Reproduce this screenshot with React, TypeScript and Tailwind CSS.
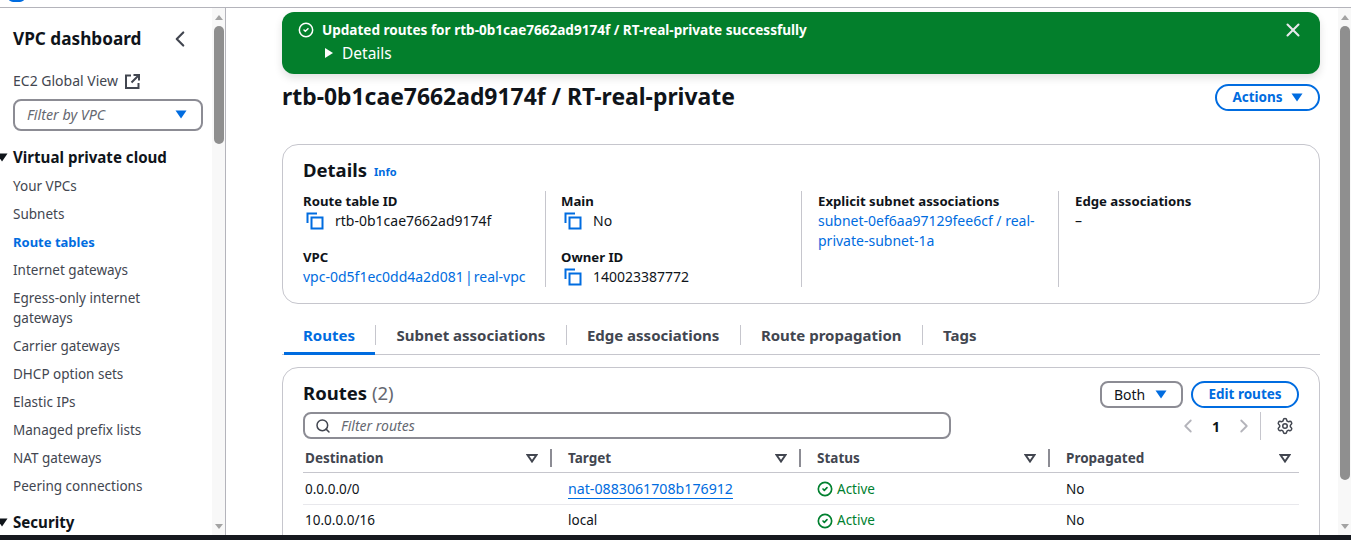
import React from 'react';
import { ChevronLeft, ChevronRight, CircleCheck, Search, Settings, X } from 'lucide-react';

const navItems = [
  'Your VPCs',
  'Subnets',
  'Route tables',
  'Internet gateways',
  'Egress-only internet gateways',
  'Carrier gateways',
  'DHCP option sets',
  'Elastic IPs',
  'Managed prefix lists',
  'NAT gateways',
  'Peering connections',
];

function Caret({ className = '' }: { className?: string }) {
  return (
    <svg width="12" height="9" viewBox="0 0 12 9" className={className}>
      <path d="M0.5 0.5H11.5L6 8.5Z" fill="currentColor" />
    </svg>
  );
}

function CopyIcon() {
  return (
    <svg width="18" height="18" viewBox="0 0 18 18" fill="none" stroke="#006ce0" strokeWidth="2" className="shrink-0">
      <path d="M1.5 11V1.5H11" />
      <rect x="5.5" y="5.5" width="11" height="11" />
    </svg>
  );
}

function SortIcon() {
  return (
    <svg width="12" height="9" viewBox="0 0 12 9" fill="none" stroke="#424650" strokeWidth="2" className="shrink-0">
      <path d="M1.5 1H10.5L6 7.5Z" />
    </svg>
  );
}

function Scrollbar({ thumbHeight }: { thumbHeight: string }) {
  return (
    <div className="flex h-full w-[13px] shrink-0 flex-col items-center bg-[#f8f8f8]">
      <div className="flex h-[18px] shrink-0 items-center justify-center">
        <div className="h-0 w-0 border-x-[4px] border-b-[5px] border-x-transparent border-b-[#a3a3a3]" />
      </div>
      <div className={`w-[10px] shrink-0 rounded-full bg-[#8f8f8f] ${thumbHeight}`} />
      <div className="flex-1" />
      <div className="flex h-[18px] shrink-0 items-center justify-center">
        <div className="h-0 w-0 border-x-[4px] border-t-[5px] border-x-transparent border-t-[#a3a3a3]" />
      </div>
    </div>
  );
}

function Sidebar() {
  return (
    <aside className="flex w-[226px] shrink-0 border-r border-[#b4b4bb] bg-white">
      <div className="min-w-0 flex-1 overflow-hidden">
        <div className="flex h-[62px] items-center justify-between pl-[13px] pr-[19px]">
          <h2 className="text-[17.2px] font-bold leading-[22px] text-[#0f141a]">VPC dashboard</h2>
          <ChevronLeft size={26} strokeWidth={2} className="text-[#424650]" />
        </div>
        <div className="flex items-center gap-[7px] pl-[13px] text-[14px] leading-[22px] text-[#424650]">
          EC2 Global View
          <svg width="15" height="15" viewBox="0 0 15 15" fill="none" stroke="#424650" strokeWidth="2">
            <path d="M6 1.5H1V14H13.5V9" />
            <path d="M6.5 8.5L13.5 1.5M8.5 1H14V6.5" />
          </svg>
        </div>
        <div className="ml-[13px] mt-[7px] flex h-[32px] w-[190px] items-center justify-between rounded-lg border-2 border-[#8c8c94] pb-[1px] pl-[12px] pr-[14px]">
          <span className="text-[14.3px] italic leading-[20px] text-[#656871]">Filter by VPC</span>
          <Caret className="text-[#006ce0]" />
        </div>
        <div className="mt-[15px] flex h-[22px] items-center">
          <Caret className="-ml-[4px] mr-[5px] w-[12px] text-[#0f141a]" />
          <span className="text-[15.1px] font-bold text-[#0f141a]">Virtual private cloud</span>
        </div>
        <ul className="mt-[4px]">
          {navItems.map((item) => (
            <li
              key={item}
              className={`py-[4px] pl-[13px] pr-[32px] leading-[20px] ${
                item === 'Route tables' ? 'text-[13px] font-bold text-[#006ce0]' : 'text-[13.5px] text-[#424650]'
              }`}
            >
              {item}
            </li>
          ))}
        </ul>
        <div className="mt-[11px] flex h-[22px] items-center">
          <Caret className="-ml-[4px] mr-[5px] w-[12px] text-[#0f141a]" />
          <span className="text-[15.1px] font-bold text-[#0f141a]">Security</span>
        </div>
      </div>
      <Scrollbar thumbHeight="h-[118px]" />
    </aside>
  );
}

function Field({ label, children }: { label: string; children: React.ReactNode }) {
  return (
    <div>
      <div className="text-[13.2px] font-bold leading-[20px] text-[#0f141a]">{label}</div>
      <div className="text-[14px] leading-[20px] text-[#0f141a]">{children}</div>
    </div>
  );
}

function Copyable({ text }: { text: string }) {
  return (
    <div className="flex items-center gap-[11px] pl-[3px]">
      <CopyIcon />
      <span>{text}</span>
    </div>
  );
}

function DetailsCard() {
  return (
    <section className="mt-[34px] h-[160px] rounded-2xl border border-[#c6c6cd] px-[20px] pt-[12px]">
      <div className="flex h-[26px] items-center gap-[7px]">
        <h2 className="text-[18.5px] font-bold text-[#0f141a]">Details</h2>
        <span className="mt-[4px] text-[11px] font-bold text-[#006ce0]">Info</span>
      </div>
      <div className="mt-[8px] grid grid-cols-[243px_256px_257px_1fr]">
        <div className="flex h-[96px] flex-col gap-[16px] border-r border-[#c6c6cd]">
          <Field label="Route table ID">
            <Copyable text="rtb-0b1cae7662ad9174f" />
          </Field>
          <Field label="VPC">
            <span className="text-[#006ce0] [word-spacing:-2.5px]">vpc-0d5f1ec0dd4a2d081 | real-vpc</span>
          </Field>
        </div>
        <div className="flex h-[96px] flex-col gap-[16px] border-r border-[#c6c6cd] pl-[15px]">
          <Field label="Main">
            <Copyable text="No" />
          </Field>
          <Field label="Owner ID">
            <Copyable text="140023387772" />
          </Field>
        </div>
        <div className="h-[96px] border-r border-[#c6c6cd] pl-[16px] pr-[16px]">
          <Field label="Explicit subnet associations">
            <span className="text-[#006ce0]">subnet-0ef6aa97129fee6cf / real-private-subnet-1a</span>
          </Field>
        </div>
        <div className="h-[96px] pl-[16px]">
          <Field label="Edge associations">–</Field>
        </div>
      </div>
    </section>
  );
}

function Tabs() {
  const tabs = ['Routes', 'Subnet associations', 'Edge associations', 'Route propagation', 'Tags'];
  return (
    <div className="mt-[21px] flex h-[30px] items-start border-b border-[#c6c6cd] pl-[0.75px]">
      {tabs.map((tab, i) => (
        <div
          key={tab}
          className={`flex h-[20px] items-center px-[20.25px] text-[15px] font-bold leading-[20px] ${
            i < tabs.length - 1 ? 'border-r border-[#c6c6cd]' : ''
          } ${i === 0 ? 'relative text-[#006ce0]' : 'text-[#424650]'}`}
        >
          {tab}
          {i === 0 && <div className="absolute bottom-[-10px] left-[1px] right-0 h-[3px] bg-[#006ce0]" />}
        </div>
      ))}
    </div>
  );
}

const columns = ['Destination', 'Target', 'Status', 'Propagated'];

function RouteRow({ dest, target, link, last }: { dest: string; target: string; link?: boolean; last?: boolean }) {
  return (
    <div
      className={`grid grid-cols-4 items-center text-[13.5px] text-[#0f141a] ${
        last ? 'h-[31px]' : 'h-[32px] border-b border-[#e8e8ec] pt-[1px]'
      }`}
    >
      <div className="pl-[2px]">{dest}</div>
      <div className="pl-[16px]">
        {link ? <span className="border-b border-[#006ce0] text-[14.2px] text-[#006ce0]">{target}</span> : target}
      </div>
      <div className="flex items-center gap-[4px] pl-[16px] text-[#00802f]">
        <CircleCheck size={16} strokeWidth={2.5} />
        Active
      </div>
      <div className="pl-[16px]">No</div>
    </div>
  );
}

function RoutesCard() {
  return (
    <section className="mt-[12px] h-[200px] rounded-2xl border border-[#c6c6cd] px-[20px] pt-[12px]">
      <div className="flex h-[28px] items-center justify-between">
        <h2 className="mb-[2px] text-[18.5px] font-bold text-[#0f141a]">
          Routes <span className="font-normal text-[#656871]">(2)</span>
        </h2>
        <div className="flex gap-[8px]">
          <div className="flex h-[27px] w-[83px] items-center justify-between rounded-lg border-2 border-[#8c8c94] pl-[12px] pr-[14px] text-[14px] text-[#0f141a]">
            Both
            <Caret className="text-[#006ce0]" />
          </div>
          <div className="flex h-[27px] w-[108px] items-center justify-center rounded-full border-2 border-[#006ce0] text-[13.5px] font-bold text-[#006ce0]">
            Edit routes
          </div>
        </div>
      </div>
      <div className="mt-[4px] flex items-start justify-between">
        <div className="flex h-[27px] w-[648px] items-center rounded-lg border-2 border-[#8c8c94] pl-[10px]">
          <Search size={16} strokeWidth={2.25} className="text-[#424650]" />
          <span className="ml-[10px] text-[14px] italic text-[#656871]">Filter routes</span>
        </div>
        <div className="flex h-[28px] items-center">
          <ChevronLeft size={22} strokeWidth={2} className="text-[#b4b4bb]" />
          <span className="mx-[13px] text-[14px] font-bold text-[#0f141a]">1</span>
          <ChevronRight size={22} strokeWidth={2} className="text-[#b4b4bb]" />
          <div className="ml-[5px] h-[28px] w-px bg-[#c6c6cd]" />
          <Settings size={18} strokeWidth={2} className="ml-[15px] mr-[5px] text-[#424650]" />
        </div>
      </div>
      <div className="mt-[3px] grid h-[30px] grid-cols-4 items-center border-b border-[#c6c6cd] pt-[1px]">
        {columns.map((col, i) => (
          <div key={col} className="flex items-center justify-between">
            <span className={`text-[13.5px] font-bold text-[#424650] ${i === 0 ? 'pl-[2px]' : 'pl-[16px]'}`}>{col}</span>
            <div className="flex items-center">
              <SortIcon />
              {i < 3 ? <div className="ml-[12px] h-[18px] w-[2px] bg-[#8c8c94]" /> : <div className="w-[8px]" />}
            </div>
          </div>
        ))}
      </div>
      <RouteRow dest="0.0.0.0/0" target="nat-0883061708b176912" link />
      <RouteRow dest="10.0.0.0/16" target="local" last />
    </section>
  );
}

export default function App() {
  return (
    <div className="flex h-[540px] w-full flex-col overflow-hidden bg-white font-['Noto_Sans',sans-serif]">
      <div className="relative h-[8px] shrink-0 overflow-hidden border-b border-[#b4b4bb]">
        <div className="absolute -top-[8px] left-[8px] h-[10px] w-[17px] rounded-full bg-[#006ce0]" />
      </div>
      <div className="flex min-h-0 flex-1">
        <Sidebar />
        <main className="min-w-0 flex-1 overflow-hidden pl-[56px] pr-[18px] pt-[4px]">
          <div className="flex h-[62px] rounded-xl bg-[#037f2c] pl-[16px] pr-[16px] pt-[7px] text-white shadow-[0_4px_8px_rgba(0,0,0,0.12)]">
            <CircleCheck size={16} strokeWidth={2.25} className="mt-[3px] shrink-0" />
            <div className="ml-[8px] flex-1">
              <div className="text-[13.55px] font-bold leading-[22px]">
                Updated routes for rtb-0b1cae7662ad9174f / RT-real-private successfully
              </div>
              <div className="flex items-center gap-[9px] pl-[3px] text-[15.5px] leading-[24px]">
                <div className="h-0 w-0 border-y-[5.5px] border-l-[8px] border-y-transparent border-l-white" />
                Details
              </div>
            </div>
            <X size={22} strokeWidth={2.25} className="shrink-0 text-[#e8e8ec]" />
          </div>
          <div className="mt-[8px] flex h-[28px] items-center justify-between">
            <h1 className="mt-[2px] text-[22.9px] font-bold leading-[28px] text-[#0f141a]">rtb-0b1cae7662ad9174f / RT-real-private</h1>
            <div className="mt-[2px] flex h-[27px] w-[105px] items-center justify-center gap-[8px] rounded-full border-2 border-[#006ce0] text-[13.5px] font-bold text-[#006ce0]">
              Actions
              <Caret />
            </div>
          </div>
          <DetailsCard />
          <Tabs />
          <RoutesCard />
        </main>
        <Scrollbar thumbHeight="h-[454px]" />
      </div>
      <div className="h-[5px] shrink-0 bg-[#16191f]" />
    </div>
  );
}
